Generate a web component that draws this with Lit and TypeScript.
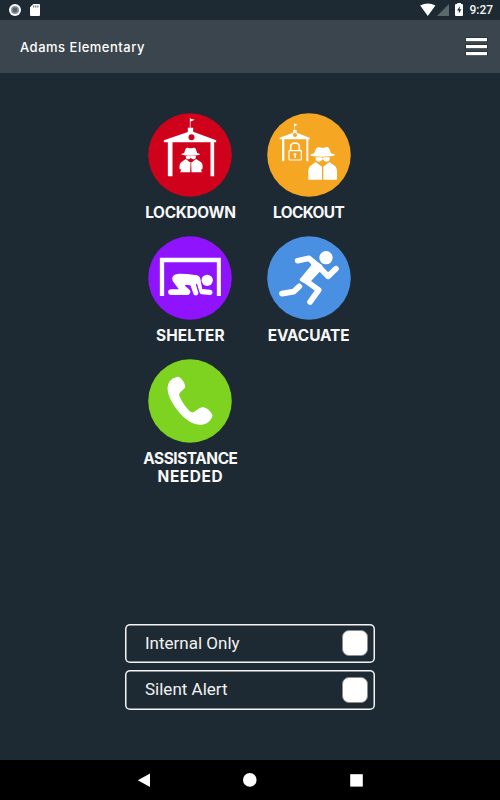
import { LitElement, html, css, svg } from "lit";
import { customElement } from "lit/decorators.js";
import { styleMap } from "lit/directives/style-map.js";

// Each action's artwork is drawn on a 252-unit disc.
const spy = svg`
  <path d="M133 143 L137 131 Q139 126 146 128 Q152 130 158 128 Q166 126 168 131 L172 143 Q181 145 181 147 Q178 151 153 151 Q127 151 124 147 Q124 145 133 143Z"/>
  <path d="M138 151 h12 l3 2 3-2 h12 q1 11-7 11 q-5 0-8-5 q-3 5-8 5 q-8 0-7-11Z"/>
  <path d="M138 161 L153 173 L169 161 L184 171 Q190 177 188 190 L184 193 L186 201 L155 201 L154 171 L152 171 L151 201 L121 201 L124 193 L119 190 Q118 176 124 171Z"/>`;

const actions = [
  {
    lines: [{ text: "LOCKDOWN", spacing: -0.3 }],
    color: "#d0021b",
    box: "24.5 23 252 252",
    art: svg`
      <path d="M150 38 h2 v2 l13 3 -11 5 h-2 v19 h8 v12 L229 105 V111 H223 V213 H212 V111 H98 V213 H84 V111 H72 V105 L144 80 V67 H150Z"/>
      <circle cx="155" cy="96" r="9" fill="#d0021b"/>
      ${spy}`,
  },
  {
    lines: [{ text: "LOCKOUT", spacing: -0.6 }],
    color: "#f5a623",
    box: "25 23 252 252",
    art: svg`
      <path d="M106 54 h2 v1 l9 3 -8 4 h-1 v12 h6 v8 L153 97 V102 H149 V168 H143 V102 H77 V168 H70 V102 H63 V97 L103 82 V74 H106Z"/>
      <circle cx="109" cy="89" r="6" fill="#f5a623"/>
      <path d="M96 136 V124 Q96 113 109 113 Q122 113 122 124 V136" fill="none" stroke="#fff" stroke-width="5"/>
      <rect x="91" y="136" width="37" height="28" rx="2" fill="none" stroke="#fff" stroke-width="3.5"/>
      <circle cx="109" cy="147" r="4"/><path d="M108 147 h3 l1 11 h-5Z"/>
      <path d="M166 144 L172 130 Q174 124 182 126 Q191 129 201 126 Q209 123 212 130 L217 144 Q229 147 229 150 Q222 154 191 154 Q158 154 154 150 Q155 147 166 144Z"/>
      <path d="M171 156 h17 l4 2 4-2 h17 q2 13-9 13 q-8 0-12-7 q-4 7-12 7 q-11 0-9-13Z"/>
      <path d="M171 170 L190 184 V223 H149 V208 Q147 186 158 180Z M212 170 L194 184 V223 H235 V208 Q237 186 226 180Z"/>`,
  },
  {
    lines: [{ text: "SHELTER", spacing: 0.1 }],
    color: "#9013fe",
    box: "24.5 17 252 252",
    art: svg`
      <path d="M60 82 H243 V197 H231 V96 H73 V197 H60Z"/>
      <circle cx="202" cy="150" r="17"/>
      <path d="M117 130 Q144 130 165 134 Q181 134 182 148 L187 176 L211 178 Q218 179 218 186 Q218 194 210 194 L185 192 Q180 190 178 184 L172 162 L168 160 L175 186 Q177 193 170 195 Q163 196 160 190 L151 165 L138 163 L135 166 L149 178 Q153 182 151 188 Q149 194 142 194 H94 Q85 194 85 185 Q85 177 94 177 H117 L103 158 Q97 153 97 144 Q99 131 117 130Z"/>
      <path d="M151 166 L160 191 M169 160 L178 187" stroke="#9013fe" stroke-width="2"/>`,
  },
  {
    lines: [{ text: "EVACUATE", spacing: -0.1 }],
    color: "#4a90e2",
    box: "25 17 252 252",
    art: svg`
      <circle cx="202" cy="82" r="20"/>
      <g fill="none" stroke="#fff" stroke-width="17" stroke-linecap="round" stroke-linejoin="round">
        <path d="M117 91 L151 84 L174 104"/>
        <path d="M179 108 L208 138 L232 115"/>
        <path d="M154 215 L180 179 L150 157"/>
        <path d="M70 190 L105 184 L122 168"/>
      </g>
      <path d="M154 82 L190 104 Q194 114 186 121 L158 151 L145 163 L124 151 L123 147 L158 105Z"/>
      <path d="M117 152 L138 168" stroke="#4a90e2" stroke-width="2.5"/>`,
  },
  {
    lines: [{ text: "ASSISTANCE", spacing: -0.45 }, { text: "NEEDED", spacing: 0.6 }],
    color: "#7ed321",
    box: "40.5 21 252 252",
    art: svg`
      <path d="M127 75 Q132 73 137 77 Q149 87 152 102 Q153 106 150 109 L136 122 Q132 127 135 133 Q147 160 166 178 Q172 183 178 180 L196 168 Q201 165 207 166 Q221 169 232 185 Q236 190 232 197 Q221 216 202 218 Q170 222 136 184 Q98 139 99 108 Q100 82 127 75Z"/>`,
  },
];

const options = ["Internal Only", "Silent Alert"];

@customElement("app-root")
export class AppRoot extends LitElement {
  static styles = css`
    :host {
      display: flex;
      flex-direction: column;
      height: 800px;
      width: 500px;
      box-sizing: border-box;
      background: #1e2a33;
      color: #fff;
      overflow: hidden;
      font-family: Inter, sans-serif;
    }
    svg { display: block; flex: none; }
    .status {
      display: flex;
      height: 20px;
      flex: none;
    }
    .clock {
      font: 500 12px/20px Roboto, sans-serif;
      margin-left: 4.5px;
      color: #f2f4f4;
    }
    .spacer { flex: 1; }
    .right { display: flex; width: 81px; }
    .header {
      height: 53px;
      flex: none;
      background: #3b454d;
      display: flex;
      align-items: center;
      justify-content: space-between;
      padding: 0 12px 0 20px;
      box-sizing: border-box;
    }
    .title {
      font-size: 13px;
      font-weight: 500;
      line-height: 18px;
      letter-spacing: 0.5px;
    }
    .actions {
      display: grid;
      grid-template-columns: 118.2px 118.2px;
      grid-auto-rows: 123.25px;
      margin: 39.6px 0 0 131.3px;
    }
    .action { display: flex; flex-direction: column; align-items: center; }
    .label {
      margin-top: 7.3px;
      font-size: 15.4px;
      font-weight: 700;
      line-height: 18px;
      text-align: center;
      color: #f8f8f8;
    }
    .line { display: block; white-space: nowrap; }
    .options {
      margin: auto 125px 50.5px;
      display: flex;
      flex-direction: column;
      gap: 7px;
    }
    .option {
      height: 39.5px;
      box-sizing: border-box;
      box-shadow: inset 0 0 0 1.5px #f4f4f4;
      border-radius: 5px;
      display: flex;
      align-items: center;
      justify-content: space-between;
      padding: 0 7px 0 20px;
      font: 400 17px/20px Roboto, sans-serif;
      color: #f1f1f1;
    }
    .name { margin-top: -1px; }
    .check {
      width: 26px;
      height: 26px;
      border-radius: 7px;
      background: #fff;
      border: 1px solid #8d8d8d;
      box-sizing: border-box;
    }
    .nav { height: 40px; flex: none; background: #000; }
  `;

  render() {
    return html`
      <div class="status">
        <svg width="50" height="20" viewBox="0 0 50 20">
          <circle cx="15" cy="10" r="6" fill="#fff" />
          <circle cx="15" cy="10" r="4" fill="#87939a" />
          <circle cx="15" cy="10" r="2.4" fill="#56636b" />
          <path d="M33.3 4 H39 Q40 4 40 5 V15 Q40 16 39 16 H31 Q30 16 30 15 V7.3Z" fill="#fff" />
          <path d="M33.7 5.5 v2 M35.8 5.5 v2 M37.9 5.5 v2" stroke="#4a555c" />
        </svg>
        <div class="spacer"></div>
        <div class="right">
          <svg width="46" height="20" viewBox="419 0 46 20">
            <path d="M420.2 5.5 Q427.8 1.3 435.4 5.5 L427.8 16Z" fill="#fff" />
            <path d="M449 4 V16 H437Z" fill="#5c666d" />
            <path d="M457.2 4 V3 H461 V4 H462 Q463 4 463 5 V15 Q463 16 462 16 H456 Q455 16 455 15 V5 Q455 4 456 4Z" fill="#fff" />
            <path d="M460 6 L457 10.5 H458.8 V13.5 L461.5 9.3 H459.6Z" fill="#28343c" />
          </svg>
          <span class="clock">9:27</span>
        </div>
      </div>
      <div class="header">
        <span class="title">Adams Elementary</span>
        <svg width="23" height="21" viewBox="0 0 23 21">
          <path d="M.5 1.5h22v4.6H.5z M.5 8.5h22v4.6H.5z M.5 15.5h22v4.6H.5z" fill="#1c242a" />
          <path d="M1 2h21v3.2H1z M1 9h21v3.2H1z M1 16h21v3.2H1z" fill="#fff" />
        </svg>
      </div>
      <div class="actions">
        ${actions.map(
          (a) => html`<div class="action">
            <svg width="84" height="84" viewBox=${a.box} fill="#fff">
              ${this.disc(a.box, a.color)} ${a.art}
            </svg>
            <div class="label">
              ${a.lines.map(
                (l) => html`<span class="line" style=${styleMap({ letterSpacing: `${l.spacing}px` })}>${l.text}</span>`
              )}
            </div>
          </div>`
        )}
      </div>
      <div class="options">
        ${options.map(
          (o) => html`<div class="option">
            <span class="name">${o}</span>
            <span class="check"></span>
          </div>`
        )}
      </div>
      <div class="nav">
        <svg width="500" height="40" viewBox="0 0 500 40" fill="#fff">
          <path d="M137.8 20.3 L150 13.4 V27Z" />
          <circle cx="249.8" cy="19.9" r="6.8" />
          <rect x="350.2" y="14.2" width="12.6" height="12.4" />
        </svg>
      </div>
    `;
  }

  disc(box: string, color: string) {
    const [x, y] = box.split(" ").map(Number);
    return svg`<circle cx=${x + 126} cy=${y + 126} r="125.3" fill=${color} />`;
  }
}
